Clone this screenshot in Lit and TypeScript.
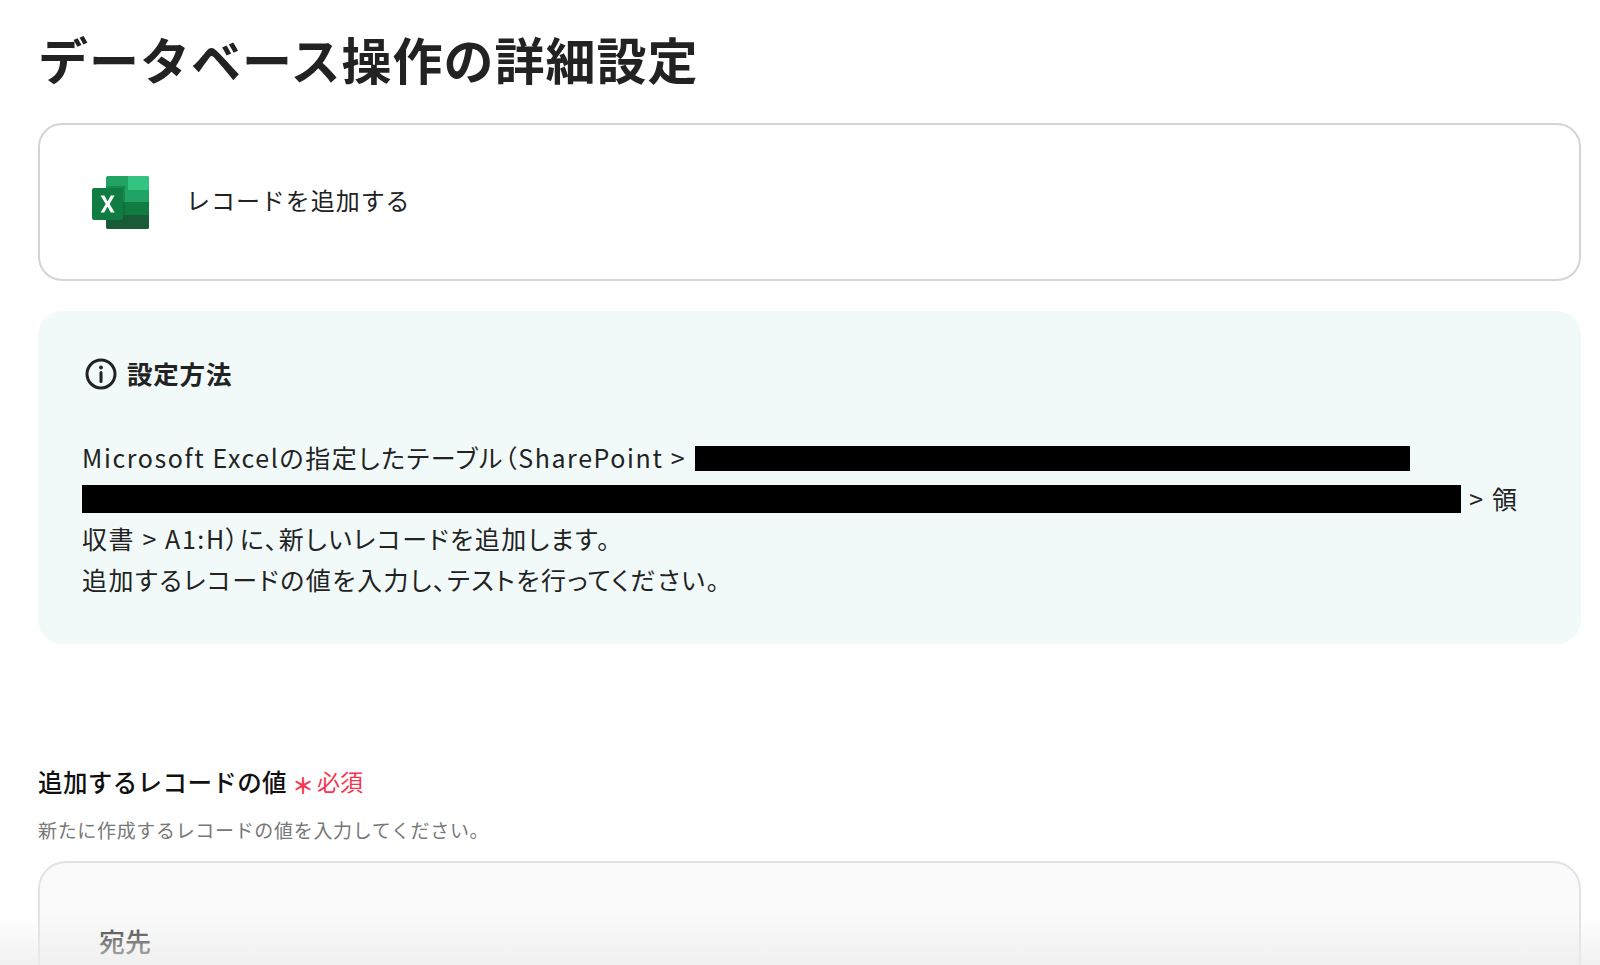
import { LitElement, css, html } from 'lit';
import { customElement } from 'lit/decorators.js';

@customElement('app-root')
export class AppRoot extends LitElement {
  static styles = css`
    :host {
      display: block;
      position: relative;
      height: 965px;
      overflow: hidden;
      background: #fff;
      color: #222;
      font-family: 'Noto Sans CJK JP', 'Noto Sans', sans-serif;
    }

    .page {
      display: flex;
      flex-direction: column;
      padding: 0 19px 0 38px;
    }

    h1 {
      margin: 22px 0 4px;
      font-size: 50px;
      line-height: 72px;
      font-weight: 700;
      letter-spacing: 1px;
      color: #222;
    }

    .action {
      display: flex;
      align-items: center;
      gap: 36px;
      height: 158px;
      margin-top: 25px;
      padding-left: 52px;
      box-sizing: border-box;
      border: 2px solid #d4d4d4;
      border-radius: 24px;
    }

    .action svg {
      width: 58px;
      height: 54px;
      flex: none;
      margin-top: 1px;
    }

    .action span {
      font-size: 24px;
      letter-spacing: 0.95px;
      padding-bottom: 5px;
    }

    .info {
      margin-top: 30px;
      height: 333px;
      box-sizing: border-box;
      padding: 41px 44px 0;
      background: #f1faf9;
      border-radius: 24px;
    }

    .info-head {
      display: flex;
      align-items: center;
      gap: 10px;
      height: 40px;
      margin-left: 3px;
      font-size: 25.5px;
      font-weight: 700;
      letter-spacing: 0.8px;
    }

    .info-head svg {
      width: 32px;
      height: 32px;
      margin-top: 4px;
    }

    .info p {
      margin: 45px 0 0;
      font-size: 25px;
      line-height: 40.5px;
      letter-spacing: 1.6px;
      color: #222;
      font-feature-settings: 'palt';
    }

    .redact {
      display: inline-block;
      background: #000;
    }

    .r1 {
      width: 715px;
      height: 25px;
      margin-left: 2px;
      vertical-align: -3.2px;
    }

    .r2 {
      width: 1379px;
      height: 28px;
      margin-right: 1px;
      vertical-align: -4.2px;
    }

    .field {
      margin-top: 117px;
    }

    .label {
      display: flex;
      align-items: center;
      height: 40px;
      font-size: 24.5px;
      font-weight: 500;
      letter-spacing: 0.4px;
      color: #111;
    }

    .req {
      display: flex;
      align-items: center;
      margin-left: 5px;
      font-size: 23px;
      font-weight: 400;
      letter-spacing: 0;
      color: #f5364f;
    }

    .req b {
      font-size: 22px;
      font-weight: 700;
      margin: 6px 3px 0 0;
    }

    .desc {
      margin-top: 14px;
      font-size: 19px;
      line-height: 30px;
      letter-spacing: 0.67px;
      color: #777;
    }

    .panel {
      margin-top: 16px;
      height: 200px;
      box-sizing: border-box;
      padding: 58px 59px 0;
      background: #fafafa;
      border: 2px solid #dfe3e8;
      border-radius: 28px;
    }

    .panel-title {
      font-size: 26px;
      line-height: 40px;
      font-weight: 500;
      color: #333;
    }

    .fade {
      position: absolute;
      left: 0;
      right: 0;
      bottom: 0;
      height: 50px;
      background: linear-gradient(to bottom, rgba(236, 236, 236, 0), rgba(236, 236, 236, 0.75));
      pointer-events: none;
    }
  `;

  render() {
    return html`
      <div class="page">
        <h1>データベース操作の詳細設定</h1>

        <div class="action">
          <svg viewBox="0 0 58 54">
            <rect x="14" y="0" width="43" height="53" rx="2" fill="#21a366"></rect>
            <path d="M36 0h19a2 2 0 0 1 2 2v12H36z" fill="#33c481"></path>
            <rect x="14" y="26" width="43" height="14" fill="#107c41"></rect>
            <path d="M14 39h43v12a2 2 0 0 1-2 2H16a2 2 0 0 1-2-2z" fill="#185c37"></path>
            <rect x="14" y="10" width="19" height="35" fill="#0b5a30" opacity="0.35"></rect>
            <rect x="0" y="12" width="31" height="32" rx="2" fill="#107c41"></rect>
            <path d="M8.5 19.5h3.9l3.2 6 3.3-6h3.7l-5 8.5 5.1 8.5h-3.9l-3.3-6.1-3.3 6.1H8.6l5.1-8.5z" fill="#fff"></path>
          </svg>
          <span>レコードを追加する</span>
        </div>

        <section class="info">
          <div class="info-head">
            <svg viewBox="0 0 32 32" fill="none" stroke="#222" stroke-width="3">
              <circle cx="16" cy="16" r="14"></circle>
              <path d="M16 14.5v9" stroke-linecap="round"></path>
              <circle cx="16" cy="9.5" r="1.9" fill="#222" stroke="none"></circle>
            </svg>
            設定方法
          </div>
          <p>
            Microsoft Excelの指定したテーブル（SharePoint &gt; <span class="redact r1"></span><br />
            <span class="redact r2"></span> &gt; 領<br />
            収書 &gt; A1:H）に、新しいレコードを追加します。<br />
            追加するレコードの値を入力し、テストを行ってください。
          </p>
        </section>

        <section class="field">
          <div class="label">
            追加するレコードの値
            <span class="req"><b>＊</b>必須</span>
          </div>
          <div class="desc">新たに作成するレコードの値を入力してください。</div>
          <div class="panel">
            <div class="panel-title">宛先</div>
          </div>
        </section>
      </div>
      <div class="fade"></div>
    `;
  }
}
